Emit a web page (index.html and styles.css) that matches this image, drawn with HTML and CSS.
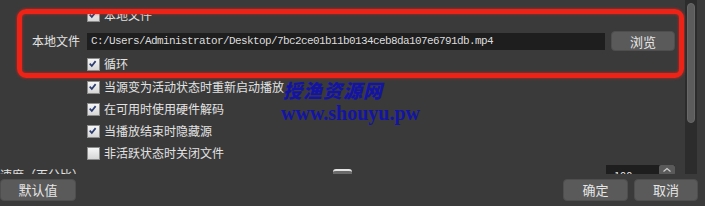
FILE: index.html
```html
<!DOCTYPE html>
<html>
<head>
<meta charset="utf-8">
<link rel="stylesheet" href="styles.css">
</head>
<body>
<div class="window">
  <div class="scroll-area">
    <div class="viewport">
      <div class="form">
        <div class="row row-first">
          <span class="label"></span>
          <span class="check on"><svg viewBox="0 0 13 13"><path d="M3 6.5 L5.5 9.2 L10 3.5"/></svg></span>
          <span class="text">本地文件</span>
        </div>
        <div class="row row-input">
          <span class="label">本地文件</span>
          <span class="path">C:/Users/Administrator/Desktop/7bc2ce01b11b0134ceb8da107e6791db.mp4</span>
          <span class="btn browse">浏览</span>
        </div>
        <div class="row">
          <span class="label"></span>
          <span class="check on"><svg viewBox="0 0 13 13"><path d="M3 6.5 L5.5 9.2 L10 3.5"/></svg></span>
          <span class="text">循环</span>
        </div>
        <div class="row row-gap">
          <span class="label"></span>
          <span class="check on"><svg viewBox="0 0 13 13"><path d="M3 6.5 L5.5 9.2 L10 3.5"/></svg></span>
          <span class="text">当源变为活动状态时重新启动播放</span>
        </div>
        <div class="row">
          <span class="label"></span>
          <span class="check on"><svg viewBox="0 0 13 13"><path d="M3 6.5 L5.5 9.2 L10 3.5"/></svg></span>
          <span class="text">在可用时使用硬件解码</span>
        </div>
        <div class="row">
          <span class="label"></span>
          <span class="check on"><svg viewBox="0 0 13 13"><path d="M3 6.5 L5.5 9.2 L10 3.5"/></svg></span>
          <span class="text">当播放结束时隐藏源</span>
        </div>
        <div class="row">
          <span class="label"></span>
          <span class="check"></span>
          <span class="text">非活跃状态时关闭文件</span>
        </div>
        <div class="row row-speed">
          <span class="label">速度（百分比）</span>
          <span class="slider"><span class="handle" style="left:246px"></span></span>
          <span class="spin"><span class="spin-val">100</span><span class="spin-up">
            <svg viewBox="0 0 16 10"><path d="M4.5 6.5 L8 3.5 L11.5 6.5"/></svg></span></span>
        </div>
      </div>
    </div>
    <div class="scrollbar"><div class="thumb"></div></div>
  </div>
  <div class="bottom-bar">
    <span class="btn btn-default">默认值</span>
    <span class="spacer"></span>
    <span class="btn btn-ok">确定</span>
    <span class="btn btn-cancel">取消</span>
  </div>
  <div class="highlight"></div>
  <div class="watermark">
    <div class="wm-cn">授渔资源网</div>
    <div class="wm-url">www.shouyu.pw</div>
  </div>
</div>
</body>
</html>
```
FILE: styles.css
```css
html, body {
  margin: 0;
  padding: 0;
}
body {
  background: #3a3a3a;
  font-family: "Noto Sans CJK SC", "Noto Sans", sans-serif;
  font-size: 12px;
  color: #e2e2e2;
}
.window {
  position: relative;
  width: 705px;
  height: 206px;
  overflow: hidden;
}
.scroll-area {
  display: flex;
  height: 174px;
}
.viewport {
  flex: 1;
  overflow: hidden;
}
.form {
  padding: 4px 10px 0 0;
  display: flex;
  flex-direction: column;
}
.row {
  display: flex;
  align-items: center;
  height: 22px;
  line-height: 22px;
  flex-shrink: 0;
}
.row-input {
  margin-top: 4px;
  margin-bottom: 1px;
}
.row-gap {
  margin-top: 1px;
}
.label {
  width: 80px;
  margin-right: 7px;
  text-align: right;
  flex-shrink: 0;
  white-space: nowrap;
}
.check {
  width: 11px;
  height: 11px;
  border: 1px solid #8c8c8c;
  background: linear-gradient(#f6f6f6, #d6d6d6);
  flex-shrink: 0;
  margin-right: 4px;
  display: flex;
}
.check svg {
  width: 11px;
  height: 11px;
  fill: none;
  stroke: #2b3c70;
  stroke-width: 2;
}
.check svg path {
  transform: translate(-1px, -1px);
}
.text {
  white-space: nowrap;
}
.path {
  flex: 1;
  height: 17px;
  line-height: 17px;
  background: #1e1e1e;
  font-family: "Liberation Mono", "DejaVu Sans Mono", monospace;
  font-size: 11px;
  letter-spacing: -0.6px;
  padding-left: 4px;
  color: #dcdcdc;
  white-space: nowrap;
  overflow: hidden;
}
.btn {
  height: 20px;
  line-height: 20px;
  background: #5a5a5a;
  border: 1px solid #4e4e4e;
  border-radius: 4px;
  text-align: center;
  color: #e6e6e6;
  box-sizing: border-box;
  font-size: 13px;
}
.browse {
  width: 64px;
  margin-left: 6px;
}
.slider {
  flex: 1;
  position: relative;
  height: 20px;
}
.handle {
  position: absolute;
  top: 4px;
  width: 19px;
  height: 12px;
  border-top: 2px solid #e4e4e4;
  border-radius: 3px;
  background: #6a6a6a;
  box-sizing: border-box;
}
.spin {
  width: 69px;
  height: 20px;
  margin-left: 6px;
  display: flex;
  background: #1e1e1e;
}
.spin-val {
  flex: 1;
  padding-left: 8px;
  line-height: 20px;
  font-size: 11px;
}
.spin-up {
  width: 16px;
  height: 10px;
  background: #5a5a5a;
  border-radius: 2px;
  display: flex;
}
.spin-up svg {
  width: 16px;
  height: 10px;
  fill: none;
  stroke: #cfcfcf;
  stroke-width: 1.2;
}
.scrollbar {
  width: 12px;
  margin-right: 8px;
  background: #2c2c2c;
  box-sizing: border-box;
  padding: 3px 2px 0 2px;
}
.thumb {
  height: 120px;
  background: #5c5c5c;
  border: 1px solid #686868;
  border-radius: 4px;
  box-sizing: border-box;
}
.bottom-bar {
  display: flex;
  padding: 5px 7px 0 0;
}
.bottom-bar .btn {
  height: 22px;
  line-height: 20px;
}
.btn-default {
  width: 76px;
}
.spacer {
  flex: 1;
}
.btn-ok {
  width: 65px;
}
.btn-cancel {
  width: 64px;
  margin-left: 6px;
}
.highlight {
  position: absolute;
  left: 17px;
  top: 9px;
  width: 667px;
  height: 69px;
  box-sizing: border-box;
  border: 5px solid #ec2316;
  border-radius: 9px;
  box-shadow: 0 0 3px rgba(236, 35, 22, 0.8), inset 0 0 3px rgba(236, 35, 22, 0.8);
}
.watermark {
  position: absolute;
  left: 281px;
  top: 78px;
  color: #1414a4;
}
.wm-cn {
  font-family: "Noto Sans CJK SC", sans-serif;
  font-weight: 900;
  font-style: italic;
  font-size: 19px;
  line-height: 24px;
  letter-spacing: 1px;
  padding-left: 2px;
}
.wm-url {
  font-family: "Liberation Serif", serif;
  font-weight: bold;
  font-size: 20px;
  line-height: 22px;
}
```
